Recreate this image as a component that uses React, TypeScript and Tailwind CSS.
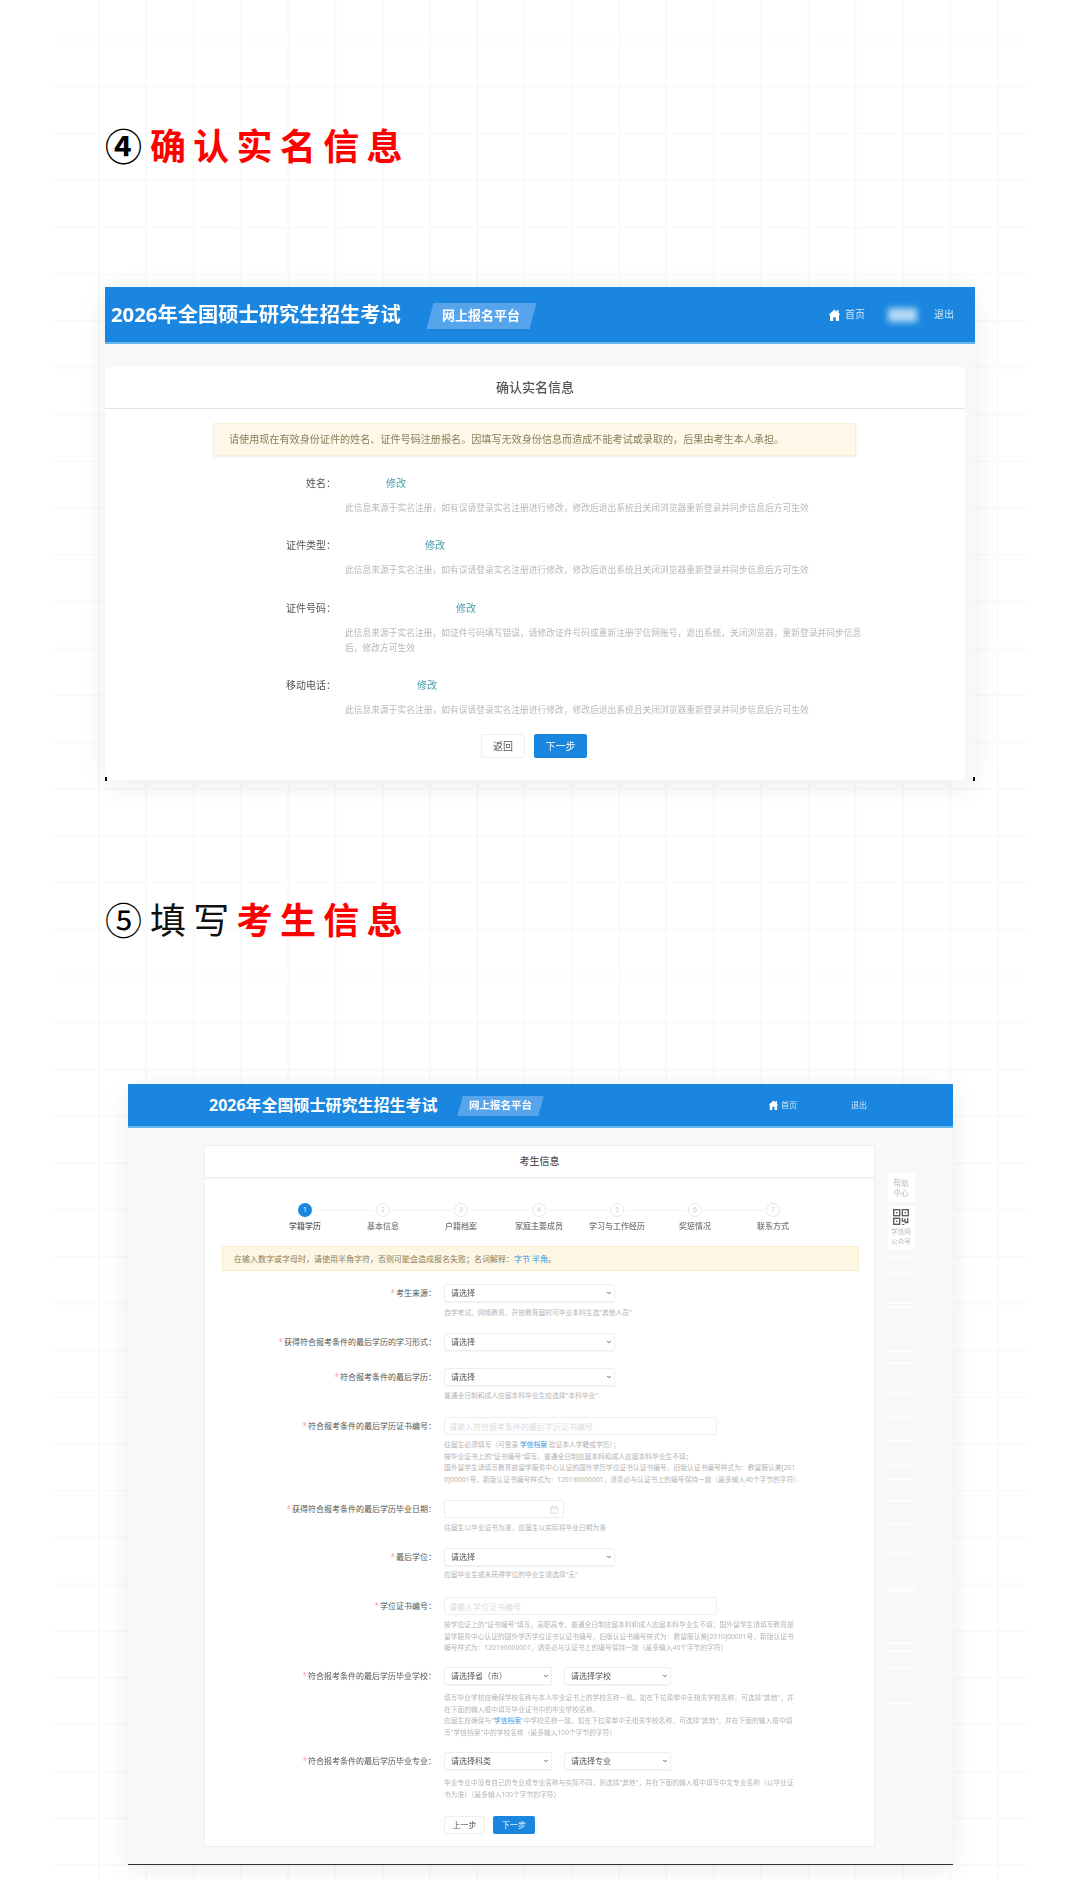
import React from "react";
import { Calendar, ChevronDown } from "lucide-react";

const CJK = "font-['Noto_Sans','Noto_Sans_CJK_SC',sans-serif]";

const longNote = "此信息来源于实名注册，如有误请登录实名注册进行修改，修改后退出系统且关闭浏览器重新登录并同步信息后方可生效";

const realNameRows = [
  { label: "姓名：", blank: "w-[35px]", top: "mt-[19px]", note: longNote },
  { label: "证件类型：", blank: "w-[74px]", top: "mt-[21px]", note: longNote },
  { label: "证件号码：", blank: "w-[105px]", top: "mt-[22px]", note: "此信息来源于实名注册，如证件号码填写错误，请修改证件号码或重新注册学信网账号，退出系统，关闭浏览器，重新登录并同步信息后，修改方可生效" },
  { label: "移动电话：", blank: "w-[66px]", top: "mt-[21px]", note: longNote },
];

const steps = ["学籍学历", "基本信息", "户籍档案", "家庭主要成员", "学习与工作经历", "奖惩情况", "联系方式"];

const railBars = ["mt-[7px]", "mt-[14px]", "mt-[27px]", "mt-[2px]", "mt-[19px]", "mt-[21px]", "mt-[10px]", "mt-[29px]", "mt-[22px]", "mt-[21px]", "mt-[23px]", "mt-[11px]", "mt-[20px]", "mt-[21px]", "mt-[28px]", "mt-[32px]", "mt-[1px]", "mt-[50px]", "mt-[6px]", "mt-[15px]", "mt-[33px]"];

const HomeIcon = ({ className }: { className: string }) => (
  <svg viewBox="0 0 11 12" className={className} fill="currentColor">
    <path d="M5.5 0.5 8 2.8V1h1.6v3.3L11 5.6 10 6.4V12H6.8V8.2H4.2V12H1V6.4L0 5.6z" />
  </svg>
);

const QrIcon = () => (
  <svg viewBox="0 0 16 16" className="mt-[3px] w-[16px] h-[16px] text-[#555555]" fill="none" stroke="currentColor" strokeWidth="1.3">
    <rect x="0.7" y="0.7" width="6" height="6" />
    <rect x="9.3" y="0.7" width="6" height="6" />
    <rect x="0.7" y="9.3" width="6" height="6" />
    <rect x="3" y="3" width="1.4" height="1.4" fill="currentColor" stroke="none" />
    <rect x="11.6" y="3" width="1.4" height="1.4" fill="currentColor" stroke="none" />
    <rect x="3" y="11.6" width="1.4" height="1.4" fill="currentColor" stroke="none" />
    <path d="M9.3 9v3.2h2.6V9.4M14.7 9v4.5h-3M9.3 15.6h2" />
  </svg>
);

const Header = ({ small }: { small?: boolean }) => (
  <div className={`flex items-center bg-[#1a86e0] border-b-2 border-[#63b5ea] text-white ${small ? "h-[44px] pl-[81px] pr-[86px]" : "h-[57px] pl-[6px] pr-[21px]"}`}>
    <div className={`font-bold whitespace-nowrap ${small ? "text-[16px]" : "text-[20.3px]"}`}>2026年全国硕士研究生招生考试</div>
    <div className={`flex items-center justify-center -skew-x-[15deg] bg-[#55a4ec] ${small ? "ml-[22px] mt-[2px] w-[81px] h-[20px]" : "ml-[29px] mt-[2px] w-[103px] h-[26px]"}`}>
      <span className={`skew-x-[15deg] font-bold whitespace-nowrap ${small ? "text-[10.5px]" : "text-[13px]"}`}>网上报名平台</span>
    </div>
    <div className={`ml-auto flex items-center ${small ? "text-[8px]" : "text-[10px]"}`}>
      <HomeIcon className={small ? "w-[9px] h-[10px] mr-[3px]" : "w-[11px] h-[12px] mr-[5px]"} />
      <span className="opacity-80">首页</span>
      {small ? (
        <span className="ml-[54px] opacity-80">退出</span>
      ) : (
        <>
          <div className="ml-[23px] w-[29px] h-[14px] bg-[#b4d9f6] blur-[3px]" />
          <span className="ml-[17px] opacity-80">退出</span>
        </>
      )}
    </div>
  </div>
);

const Help = ({ className, children }: { className?: string; children: React.ReactNode }) => (
  <div className={`text-[6.75px] leading-[11.5px] text-[#b5b5b5] whitespace-nowrap ${className ?? ""}`}>{children}</div>
);

const Pick = ({ text, width }: { text: string; width: string }) => (
  <div className={`relative h-[18px] ${width}`}>
    <select className="block w-full h-[18px] pl-[6px] appearance-none bg-white border border-[#eeeeee] rounded-[2px] shadow-[0_1px_1px_rgba(0,0,0,0.04)] text-[8px] text-[#555555]">
      <option>{text}</option>
    </select>
    <ChevronDown className="absolute right-[3px] top-[6px] w-[6px] h-[6px] text-[#555555]" strokeWidth={3.5} />
  </div>
);

const TextBox = ({ placeholder }: { placeholder: string }) => (
  <input readOnly placeholder={placeholder} className="block w-[273px] h-[18px] px-[4px] bg-white border border-[#eeeeee] rounded-[2px] text-[8px] placeholder:text-[#dcdcdc]" />
);

const FormRow = ({ label, height, children }: { label: string; height: string; children: React.ReactNode }) => (
  <div className={`flex ${height}`}>
    <div className="w-[231px] h-[18px] flex items-center justify-end text-[8px] text-[#555555] whitespace-nowrap">
      <span className="text-[#f3a5ad] mr-[1px]">*</span>
      {label}
    </div>
    <div className="ml-[8px]">{children}</div>
  </div>
);

const Link = ({ children }: { children: React.ReactNode }) => <span className="text-[#3b97e3]">{children}</span>;

export default function App() {
  return (
    <div className={`w-[1080px] h-[1880px] overflow-hidden bg-white ${CJK}`}>
      <div className="ml-[54px] w-[972px] h-[1880px] overflow-hidden bg-[linear-gradient(to_right,#f9f9f9_2px,transparent_2px),linear-gradient(to_bottom,#fafafa_2px,transparent_2px)] bg-[size:47.3px_46.8px] bg-[position:44px_39px]">
        {/* step 4 */}
        <div className="pt-[124px] pl-[51px] h-[287px]">
          <div className="flex items-center h-[46px] whitespace-nowrap">
            <span className="w-[45px] text-[37px] leading-[46px] font-bold text-black">④</span>
            <span className="text-[36px] leading-[46px] tracking-[7.3px] font-bold text-[#ff0000]">确认实名信息</span>
          </div>
        </div>

        <div className="relative ml-[51px] w-[870px] h-[494px] bg-[#f7f8fa] shadow-[0_4px_24px_rgba(0,0,0,0.08)] blur-[0.4px]">
          <Header />
          <div className="mt-[23px] w-[860px] h-[413px] bg-white">
            <div className="h-[42px] flex items-center justify-center border-b border-[#e3e3e3] text-[13px] font-medium text-[#555555]">确认实名信息</div>
            <div className="ml-[108px] mt-[14px] w-[643px] h-[33px] pl-[15px] flex items-center bg-[#fdf8e8] border border-[#f6eed6] rounded-[2px] shadow-[0_1px_2px_rgba(0,0,0,0.08)] text-[10.1px] text-[#8c7d5c] whitespace-nowrap">
              请使用现在有效身份证件的姓名、证件号码注册报名。因填写无效身份信息而造成不能考试或录取的，后果由考生本人承担。
            </div>
            {realNameRows.map((row) => (
              <div key={row.label} className={row.top}>
                <div className="flex items-center h-[16px] text-[10px]">
                  <div className="w-[231px] text-right text-[#555555]">{row.label}</div>
                  <div className={row.blank} />
                  <div className="ml-[15px] text-[#4a9fb0]">修改</div>
                </div>
                <div className="ml-[240px] mt-[10px] w-[518px] text-[8.75px] leading-[15px] text-[#b8b8b8]">{row.note}</div>
              </div>
            ))}
            <div className="mt-[16px] ml-[376px] flex gap-[9px] text-[10px]">
              <div className="w-[44px] h-[24px] flex items-center justify-center bg-white border border-[#eeeeee] rounded-[2px] text-[#555555]">返回</div>
              <div className="w-[53px] h-[24px] flex items-center justify-center bg-[#1a86e0] rounded-[2px] text-white">下一步</div>
            </div>
          </div>
          <div className="absolute left-0 bottom-0 w-[2px] h-[4px] bg-black" />
          <div className="absolute right-0 bottom-0 w-[2px] h-[4px] bg-black" />
        </div>

        {/* step 5 */}
        <div className="pt-[117px] pl-[51px] h-[303px]">
          <div className="flex items-center h-[46px] whitespace-nowrap">
            <span className="w-[45px] text-[37px] leading-[46px] text-black">⑤</span>
            <span className="text-[36px] leading-[46px] tracking-[7.3px] text-[#111111]">填写</span>
            <span className="text-[36px] leading-[46px] tracking-[7.3px] font-bold text-[#ff0000]">考生信息</span>
          </div>
        </div>

        <div className="ml-[74px] w-[825px] h-[781px] bg-[#f7f8fa] border-b border-[#333333] shadow-[0_4px_24px_rgba(0,0,0,0.08)] blur-[0.4px]">
          <Header small />
          <div className="flex">
            <div className="ml-[76px] mt-[17px] w-[671px] h-[702px] bg-white border border-[#eeeeee]">
              <div className="h-[33px] flex items-center justify-center border-b-2 border-[#f1f1f1] text-[10px] font-medium text-[#555555]">考生信息</div>

              <div className="ml-[61px] mt-[24px] flex">
                {steps.map((step, i) => (
                  <div key={step} className="relative w-[78px] flex flex-col items-center">
                    <div className={`w-[14px] h-[14px] flex items-center justify-center rounded-full text-[7px] ${i === 0 ? "bg-[#1a86e0] text-white" : "bg-white border border-[#e6e6e6] text-[#c8c8c8]"}`}>{i + 1}</div>
                    {i < 6 && <div className="absolute top-[7px] left-[49px] w-[58px] h-px bg-[#f0f0f0]" />}
                    <div className={`mt-[3px] text-[8px] leading-[12px] whitespace-nowrap font-medium ${i === 0 ? "text-[#555555]" : "text-[#777777]"}`}>{step}</div>
                  </div>
                ))}
              </div>

              <div className="ml-[17px] mt-[14px] w-[637px] h-[25px] pl-[11px] flex items-center bg-[#fdf6e3] border border-[#fbeecb] rounded-[2px] text-[8px] text-[#8c7d5c] whitespace-nowrap">
                在输入数字或字母时，请使用半角字符，否则可能会造成报名失败；名词解释：
                <Link>字节 半角</Link>。
              </div>

              <div className="mt-[13px]">
                <FormRow label="考生来源：" height="h-[49px]">
                  <Pick text="请选择" width="w-[171px]" />
                  <Help className="mt-[5px]">自学考试、网络教育、开放教育届时可毕业本科生选"其他人员"</Help>
                </FormRow>
                <FormRow label="获得符合报考条件的最后学历的学习形式：" height="h-[35px]">
                  <Pick text="请选择" width="w-[171px]" />
                </FormRow>
                <FormRow label="符合报考条件的最后学历：" height="h-[49px]">
                  <Pick text="请选择" width="w-[171px]" />
                  <Help className="mt-[4px]">普通全日制和成人应届本科毕业生应选择"本科毕业"</Help>
                </FormRow>
                <FormRow label="符合报考条件的最后学历证书编号：" height="h-[83px]">
                  <TextBox placeholder="请输入符合报考条件的最后学历证书编号" />
                  <Help className="mt-[4px]">
                    往届生必须填写（可登录 <Link>学信档案</Link> 验证本人学籍或学历）；
                    <br />
                    按毕业证书上的"证书编号"填写。普通全日制应届本科和成人应届本科毕业生不填；
                    <br />
                    国外留学生请填写教育部留学服务中心认证的国外学历学位证书认证书编号，旧版认证书编号样式为：教留服认美[201
                    <br />
                    0]00001号，新版认证书编号样式为：120190000001，请务必与认证书上的编号保持一致（最多输入40个字节的字符）
                  </Help>
                </FormRow>
                <FormRow label="获得符合报考条件的最后学历毕业日期：" height="h-[48px]">
                  <div className="w-[120px] h-[18px] pr-[4px] flex items-center justify-end bg-white border border-[#eeeeee] rounded-[2px]">
                    <Calendar className="w-[9px] h-[9px] text-[#d5d5d5]" />
                  </div>
                  <Help className="mt-[4px]">往届生以毕业证书为准，应届生以实际将毕业日期为准</Help>
                </FormRow>
                <FormRow label="最后学位：" height="h-[49px]">
                  <Pick text="请选择" width="w-[171px]" />
                  <Help className="mt-[3px]">应届毕业生或未获得学位的毕业生请选择"无"</Help>
                </FormRow>
                <FormRow label="学位证书编号：" height="h-[70px]">
                  <TextBox placeholder="请输入学位证书编号" />
                  <Help className="mt-[4px]">
                    按学位证上的"证书编号"填写。高职高专、普通全日制应届本科和成人应届本科毕业生不填；国外留学生请填写教育部
                    <br />
                    留学服务中心认证的国外学历学位证书认证书编号，旧版认证书编号样式为：教留服认美[2010]00001号，新版认证书
                    <br />
                    编号样式为：120190000001，请务必与认证书上的编号保持一致（最多输入40个字节的字符）
                  </Help>
                </FormRow>
                <FormRow label="符合报考条件的最后学历毕业学校：" height="h-[85px]">
                  <div className="flex gap-[12px]">
                    <Pick text="请选择省（市）" width="w-[108px]" />
                    <Pick text="请选择学校" width="w-[107px]" />
                  </div>
                  <Help className="mt-[7px]">
                    填写毕业学校应确保学校名称与本人毕业证书上的学校名称一致。如在下拉菜单中无相关学校名称，可选择"其他"，并
                    <br />
                    在下面的输入框中填写毕业证书中的毕业学校名称。
                    <br />
                    应届生应确保与"<Link>学信档案</Link>"中学校名称一致。如在下拉菜单中无相关学校名称，可选择"其他"，并在下面的输入框中填
                    <br />
                    写"学信档案"中的学校名称（最多输入100个字节的字符）
                  </Help>
                </FormRow>
                <FormRow label="符合报考条件的最后学历毕业专业：" height="h-[64px]">
                  <div className="flex gap-[12px]">
                    <Pick text="请选择科类" width="w-[108px]" />
                    <Pick text="请选择专业" width="w-[107px]" />
                  </div>
                  <Help className="mt-[7px]">
                    毕业专业中没有自己的专业或专业名称与实际不同，则选择"其他"，并在下面的输入框中填写中文专业名称（以毕业证
                    <br />
                    书为准）（最多输入100个字节的字符）
                  </Help>
                </FormRow>
              </div>

              <div className="ml-[239px] flex gap-[8px] text-[8px]">
                <div className="w-[41px] h-[18px] flex items-center justify-center bg-white border border-[#eeeeee] rounded-[2px] text-[#555555]">上一步</div>
                <div className="w-[42px] h-[18px] flex items-center justify-center bg-[#1a86e0] rounded-[2px] text-white">下一步</div>
              </div>
            </div>

            {/* help rail */}
            <div className="ml-[12px] mt-[45px] w-[28px] flex flex-col items-center">
              <div className="w-[27px] h-[29px] flex items-center justify-center bg-white rounded-[2px] text-[7.5px] leading-[10px] text-center text-[#bbbbbb]">帮助<br />中心</div>
              <div className="mt-[4px] w-[27px] h-[44px] flex flex-col items-center bg-white rounded-[2px]">
                <QrIcon />
                <div className="mt-[2px] text-[6.5px] leading-[9.5px] text-center text-[#bbbbbb]">学信网<br />公众号</div>
              </div>
              {railBars.map((gap, i) => (
                <div key={i} className={`w-[28px] h-[2px] bg-white/70 ${gap}`} />
              ))}
            </div>
          </div>
        </div>
      </div>
    </div>
  );
}
